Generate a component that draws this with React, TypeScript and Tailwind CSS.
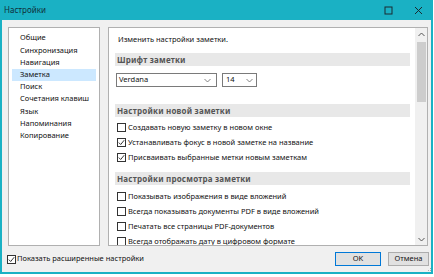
import React from "react";

const font = { fontFamily: '"Noto Sans", "Open Sans", sans-serif' };

function Check({ checked }: { checked: boolean }) {
  return (
    <div className="w-[9px] h-[9px] border border-[#333] bg-white flex items-center justify-center shrink-0">
      {checked && (
        <svg width="7" height="7" viewBox="0 0 7 7">
          <path d="M0.8 3.6 L2.7 5.5 L6.2 1.2" fill="none" stroke="#222" strokeWidth="0.9" />
        </svg>
      )}
    </div>
  );
}

function CheckRow({ checked, label }: { checked: boolean; label: string }) {
  return (
    <div className="h-[15px] flex items-center gap-[2px] text-[7.5px] text-[#111]">
      <Check checked={checked} />
      <span className="whitespace-nowrap">{label}</span>
    </div>
  );
}

function Header({ children }: { children: React.ReactNode }) {
  return (
    <div className="h-[13px] bg-[#e8e8e8] flex items-center pl-[2px] text-[8px] font-bold text-[#555] tracking-[0.2px]">
      {children}
    </div>
  );
}

function Chevron() {
  return (
    <svg width="7" height="5" viewBox="0 0 7 5">
      <path d="M0.5 1 L3.5 4 L6.5 1" fill="none" stroke="#666" strokeWidth="0.8" />
    </svg>
  );
}

export default function App() {
  const items = [
    "Общие",
    "Синхронизация",
    "Навигация",
    "Заметка",
    "Поиск",
    "Сочетания клавиш",
    "Язык",
    "Напоминания",
    "Копирование",
  ];
  return (
    <div className="w-[434px] h-[277px] bg-white" style={font}>
      <div className="w-[433px] h-[274px] flex flex-col border-x-2 border-b-2 border-[#1ab1c4] bg-[#f0f0f0]">
        <div className="h-[20px] bg-[#1ab1c4] flex items-center pl-[4px] -mx-[2px] pr-[10px] shrink-0">
          <span className="text-[8px] text-[#0f2f3a] flex-1">Настройки</span>
          <svg width="9" height="9" viewBox="0 0 9 9" className="mr-[21px]">
            <rect x="1" y="1" width="7" height="7" fill="none" stroke="#1a2a30" strokeWidth="1" />
          </svg>
          <svg width="9" height="9" viewBox="0 0 9 9">
            <path d="M1 1 L8 8 M8 1 L1 8" stroke="#1a2a30" strokeWidth="1" />
          </svg>
        </div>
        <div className="flex-1 flex flex-col">
          <div className="flex gap-[8px] pl-[6px] pr-[3px] pt-[7px] h-[226px]">
            <div className="w-[92px] h-full bg-white border border-[#b0b0b0] pt-[4px] px-[3px]">
              {items.map((it) => (
                <div
                  key={it}
                  className={
                    "h-[12.2px] flex items-center pl-[8px] text-[7.5px] text-[#111] whitespace-nowrap " +
                    (it === "Заметка" ? "bg-[#cce8ff]" : "")
                  }
                >
                  {it}
                </div>
              ))}
            </div>
            <div className="flex-1 h-full bg-white border border-[#b0b0b0] flex overflow-hidden">
              <div className="flex-1 pl-[6px] pr-[5px] pt-[6px] overflow-hidden">
                <div className="h-[12px] flex items-center pl-[3px] text-[7.5px] text-[#111]">
                  Изменить настройки заметки.
                </div>
                <div className="mt-[7px]">
                  <Header>Шрифт заметки</Header>
                </div>
                <div className="flex gap-[5px] mt-[7px] pl-[1px]">
                  <div className="w-[101px] h-[14px] border border-[#7a7a7a] flex items-center justify-between pl-[2px] pr-[5px] text-[7.5px] text-[#111]">
                    <span>Verdana</span>
                    <Chevron />
                  </div>
                  <div className="w-[35px] h-[14px] border border-[#7a7a7a] flex items-center justify-between pl-[3px] pr-[3px] text-[7.5px] text-[#111]">
                    <span>14</span>
                    <Chevron />
                  </div>
                </div>
                <div className="mt-[17px]">
                  <Header>Настройки новой заметки</Header>
                </div>
                <div className="mt-[3px] pl-[2px]">
                  <CheckRow checked={false} label="Создавать новую заметку в новом окне" />
                  <CheckRow checked={true} label="Устанавливать фокус в новой заметке на название" />
                  <CheckRow checked={true} label="Присваивать выбранные метки новым заметкам" />
                </div>
                <div className="mt-[7px]">
                  <Header>Настройки просмотра заметки</Header>
                </div>
                <div className="mt-[4px] pl-[2px]">
                  <CheckRow checked={false} label="Показывать изображения в виде вложений" />
                  <CheckRow checked={false} label="Всегда показывать документы PDF в виде вложений" />
                  <CheckRow checked={false} label="Печатать все страницы PDF-документов" />
                  <CheckRow checked={false} label="Всегда отображать дату в цифровом формате" />
                </div>
              </div>
              <div className="w-[12px] bg-[#f0f0f0] flex flex-col items-center">
                <div className="h-[12px] flex items-center justify-center">
                  <svg width="7" height="5" viewBox="0 0 7 5">
                    <path d="M0.5 4 L3.5 1 L6.5 4" fill="none" stroke="#555" strokeWidth="1" />
                  </svg>
                </div>
                <div className="w-[9px] h-[60px] bg-[#cdcdcd] mt-[2px]" />
                <div className="flex-1" />
                <div className="h-[12px] flex items-center justify-center">
                  <svg width="7" height="5" viewBox="0 0 7 5">
                    <path d="M0.5 1 L3.5 4 L6.5 1" fill="none" stroke="#555" strokeWidth="1" />
                  </svg>
                </div>
              </div>
            </div>
          </div>
          <div className="flex-1 flex items-center pl-[5px] pr-[2px] relative">
            <div className="flex items-center gap-[1px] text-[7.5px] text-[#111] flex-1">
              <Check checked={true} />
              <span>Показать расширенные настройки</span>
            </div>
            <div className="w-[46px] h-[14px] border border-[#0078d7] bg-[#e1e1e1] flex items-center justify-center text-[7.5px] text-[#111]">
              OK
            </div>
            <div className="w-[41px] h-[14px] ml-[7px] border border-[#adadad] bg-[#e1e1e1] flex items-center justify-center text-[7.5px] text-[#111]">
              Отмена
            </div>
            <svg width="4" height="4" viewBox="0 0 4 4" className="absolute right-[0px] bottom-[0px]">
              <rect x="3" y="0" width="1" height="1" fill="#aaa" />
              <rect x="1" y="2" width="1" height="1" fill="#aaa" />
              <rect x="3" y="2" width="1" height="1" fill="#aaa" />
            </svg>
          </div>
        </div>
      </div>
    </div>
  );
}
